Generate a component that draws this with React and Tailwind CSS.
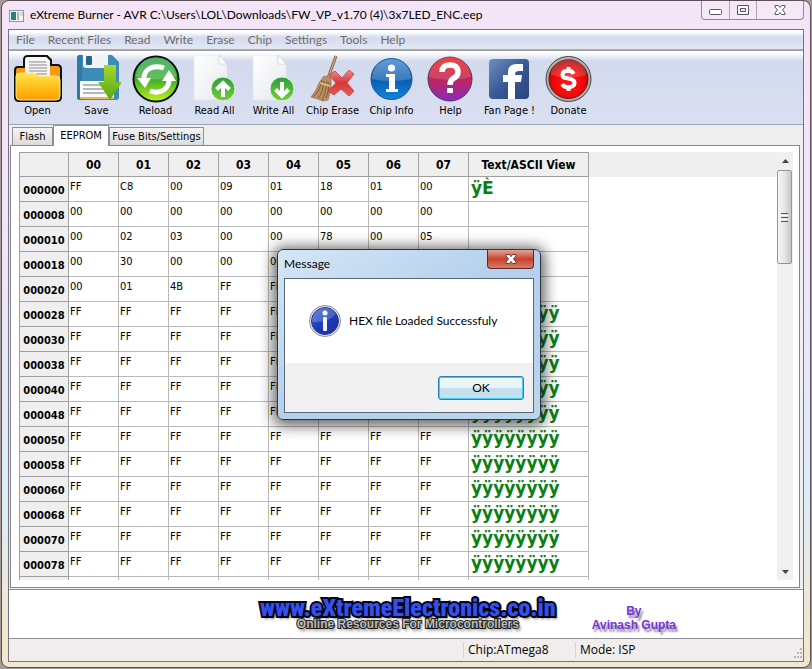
import { useId } from 'react';
import clsx from 'clsx';

const menuItems = ['File', 'Recent Files', 'Read', 'Write', 'Erase', 'Chip', 'Settings', 'Tools', 'Help'];

function OpenIcon() {
  const id = useId();
  return (
    <svg viewBox="0 0 48 48" className="h-12 w-12">
      <defs>
        <linearGradient id={id} x1="0" y1="0" x2="0" y2="1">
          <stop offset="0" stopColor="#ffe552" />
          <stop offset="0.5" stopColor="#ffc21c" />
          <stop offset="1" stopColor="#ff9b00" />
        </linearGradient>
      </defs>
      <path d="M1 42V15q0-3 3-3h6V5q0-4 4-4h19l4 4v5h6q4 0 4 4v28q0 4-4 4H5q-4 0-4-4Z" fill="#f79a10" stroke="#111" strokeWidth="2" />
      <path d="M11 22V5q0-3 3-3h18l4 4v16Z" fill="#f6f6f6" />
      <path d="M15 7h17M15 10h18M15 13h18M15 16h18M22 19h11" stroke="#888" strokeWidth="1" />
      <path d="M2 21q0-3 4-3h13l5 3h18q4 0 4 4v16q0 4-4 4H6q-4 0-4-4Z" fill={`url(#${id})`} stroke="#ffe98a" />
    </svg>
  );
}

function SaveIcon() {
  const id = useId();
  return (
    <svg viewBox="0 0 48 48" className="h-12 w-12">
      <defs>
        <linearGradient id={id} x1="0" y1="0" x2="0" y2="1">
          <stop offset="0" stopColor="#a6d92c" />
          <stop offset="1" stopColor="#55a712" />
        </linearGradient>
      </defs>
      <path d="M4 3q0-3 3-3h32l7 7v35q0 3-3 3H7q-3 0-3-3Z" fill="#3b8db8" />
      <path d="M4 3q0-3 3-3h2v45H7q-3 0-3-3Z" fill="#2c7aa5" />
      <path d="M10 0h25v10q0 3-3 3H13q-3 0-3-3Z" fill="#eef4f8" />
      <rect x="13" y="1" width="6" height="9" rx="1" fill="#24658c" />
      <path d="M7 26h34v17H7Z" fill="#fbfbfb" />
      <path d="M7 42h34v2H7Z" fill="#f0b25c" />
      <path d="M10 30h22M10 34h22M10 38h22" stroke="#9aa3ad" strokeWidth="1.5" />
      <path d="M31 10h12v17h6L37 45 25 27h6Z" fill={`url(#${id})`} />
    </svg>
  );
}

function ReloadIcon() {
  const id = useId();
  return (
    <svg viewBox="0 0 48 48" className="h-12 w-12">
      <defs>
        <linearGradient id={id} x1="0" y1="0" x2="0" y2="1">
          <stop offset="0" stopColor="#1d9a45" />
          <stop offset="0.5" stopColor="#3bae2b" />
          <stop offset="1" stopColor="#c4f01c" />
        </linearGradient>
      </defs>
      <circle cx="24" cy="24" r="22.5" fill={`url(#${id})`} stroke="#0b120b" strokeWidth="2" />
      <path d="M4 22a20 20 0 0 1 40 0q-20 5-40 0Z" fill="#fff" opacity="0.22" />
      <path d="M12 25C11 15 20 9 32 13" fill="none" stroke="#fff" strokeWidth="5" />
      <path d="M37 23C38 33 29 40 18 36" fill="none" stroke="#fff" strokeWidth="5" />
      <path d="M5 23h14l-6 10ZM30 26h14l-7-11Z" fill="#fff" />
    </svg>
  );
}

function PageIcon({ down }) {
  const id = useId();
  return (
    <svg viewBox="0 0 48 48" className="h-12 w-12">
      <defs>
        <linearGradient id={`${id}p`} x1="0" y1="0" x2="1" y2="1">
          <stop offset="0" stopColor="#fff" />
          <stop offset="1" stopColor="#e6e8ee" />
        </linearGradient>
        <linearGradient id={`${id}g`} x1="0" y1="0" x2="0" y2="1">
          <stop offset="0" stopColor="#2a9d3d" />
          <stop offset="1" stopColor="#76cf35" />
        </linearGradient>
      </defs>
      <path d="M3 0h25l8 9v36H3Z" fill={`url(#${id}p)`} stroke="#e3e5ee" strokeWidth="0.7" />
      <path d="M28 0v9h8Z" fill="#fff" stroke="#cfd2da" strokeWidth="0.8" />
      <circle cx="32" cy="34" r="12" fill={`url(#${id}g)`} stroke="#e4f6dc" strokeWidth="1" />
      <path
        d="M32 42V29M25.5 34.5 32 28l6.5 6.5"
        transform={down ? 'rotate(180 32 34.5)' : undefined}
        fill="none"
        stroke="#fff"
        strokeWidth="4"
      />
    </svg>
  );
}

function EraseIcon() {
  const id = useId();
  return (
    <svg viewBox="0 0 48 48" className="h-12 w-12">
      <defs>
        <linearGradient id={id} x1="0" y1="0" x2="0" y2="1">
          <stop offset="0" stopColor="#f08a8a" />
          <stop offset="0.5" stopColor="#d93636" />
          <stop offset="1" stopColor="#e46060" />
        </linearGradient>
      </defs>
      <path d="M27 1 19 23" stroke="#8d6a45" strokeWidth="3" />
      <path d="M27 1 19 23" stroke="#d5b48c" strokeWidth="1" />
      <path d="M15 21l7 2q1 11-3 22l-5 1-5-2-7-2Q8 35 10 28q2-3 5-7Z" fill="#b98f5e" stroke="#9a754b" strokeWidth="0.8" />
      <path d="M13 25Q11 36 4 42M15 26Q14 38 9 43M18 26Q17 38 13 45M20 27Q20 36 17 43" fill="none" stroke="#7d5a37" strokeWidth="1" />
      <path d="M11 28l10 3" stroke="#e0c49c" strokeWidth="1.5" />
      <path d="M20 20l6-4 7 7 7-8 5 4-7 9 7 8-5 5-8-7-7 6-6-4 8-8Z" fill={`url(#${id})`} stroke="#b84040" strokeWidth="0.8" />
    </svg>
  );
}

function InfoIcon() {
  const id = useId();
  return (
    <svg viewBox="0 0 48 48" className="h-12 w-12">
      <defs>
        <linearGradient id={id} x1="0" y1="0" x2="0" y2="1">
          <stop offset="0" stopColor="#3a86cc" />
          <stop offset="0.5" stopColor="#0b5cae" />
          <stop offset="1" stopColor="#1285e0" />
        </linearGradient>
      </defs>
      <circle cx="23.5" cy="24" r="20.5" fill={`url(#${id})`} stroke="#16569c" />
      <path d="M4 24a19.5 20 0 0 1 39 0q-20 4-39 0Z" fill="#fff" opacity="0.2" />
      <circle cx="23.5" cy="13" r="3.6" fill="#fff" />
      <path d="M18 19h9v15h3v3H18v-3h3V22h-3Z" fill="#fff" />
    </svg>
  );
}

function HelpIcon() {
  const id = useId();
  return (
    <svg viewBox="0 0 48 48" className="h-12 w-12">
      <defs>
        <linearGradient id={id} x1="0" y1="0" x2="0" y2="1">
          <stop offset="0" stopColor="#f3201f" />
          <stop offset="0.45" stopColor="#c4264f" />
          <stop offset="1" stopColor="#8a2bc0" />
        </linearGradient>
      </defs>
      <circle cx="23" cy="24" r="22" fill={`url(#${id})`} stroke="#54305c" />
      <path d="M2 22a21 21 0 0 1 42 0q-21 6-42 0Z" fill="#fff" opacity="0.14" />
      <path d="M15 17q0-7 8-7t8 7q0 4-4 6-4 2-4 7" fill="none" stroke="#fff" strokeWidth="5.5" />
      <rect x="20" y="33" width="6" height="5" rx="1" fill="#fff" />
    </svg>
  );
}

function FanPageIcon() {
  const id = useId();
  return (
    <svg viewBox="0 0 48 48" className="h-12 w-12">
      <defs>
        <linearGradient id={id} x1="0" y1="0" x2="1" y2="1">
          <stop offset="0" stopColor="#6f8fc2" />
          <stop offset="0.5" stopColor="#3a5a96" />
          <stop offset="1" stopColor="#2a437d" />
        </linearGradient>
      </defs>
      <rect x="3" y="4" width="40" height="40" rx="4" fill={`url(#${id})`} />
      <path d="M22 44V27h-5v-7h5v-3q0-8 9-8h6v7h-4q-4 0-4 3v1h7l-1 7h-6v17Z" fill="#fff" />
    </svg>
  );
}

function DonateIcon() {
  const id = useId();
  return (
    <svg viewBox="0 0 48 48" className="h-12 w-12">
      <defs>
        <radialGradient id={id} cx="0.5" cy="0.6" r="0.55">
          <stop offset="0" stopColor="#ff1a1a" />
          <stop offset="0.7" stopColor="#f00808" />
          <stop offset="1" stopColor="#a80d0d" />
        </radialGradient>
      </defs>
      <circle cx="23.5" cy="24" r="22.5" fill="#b3aaa5" stroke="#494343" />
      <circle cx="23.5" cy="24" r="19.5" fill={`url(#${id})`} stroke="#5d1a1a" />
      <path d="M6 20a17.5 17.5 0 0 1 35 0q-17 5-35 0Z" fill="#fff" opacity="0.16" />
      <path d="M28.5 19q-1-3-4-3h-3q-4 0-4 4 0 3 4 3l4 1q4 1 4 4t-4 4h-4q-3 0-4-3M23.5 12v4M23.5 32v4" fill="none" stroke="#fff" strokeWidth="4" />
    </svg>
  );
}

const tools = [
  { label: 'Open', icon: <OpenIcon /> },
  { label: 'Save', icon: <SaveIcon /> },
  { label: 'Reload', icon: <ReloadIcon /> },
  { label: 'Read All', icon: <PageIcon /> },
  { label: 'Write All', icon: <PageIcon down /> },
  { label: 'Chip Erase', icon: <EraseIcon /> },
  { label: 'Chip Info', icon: <InfoIcon /> },
  { label: 'Help', icon: <HelpIcon /> },
  { label: 'Fan Page !', icon: <FanPageIcon /> },
  { label: 'Donate', icon: <DonateIcon /> },
];

const tabs = [
  { label: 'Flash', width: 'w-[41px]' },
  { label: 'EEPROM', width: 'w-14' },
  { label: 'Fuse Bits/Settings', width: 'w-[95px]' },
];

const columns = ['00', '01', '02', '03', '04', '05', '06', '07'];

const blank = ['FF', 'FF', 'FF', 'FF', 'FF', 'FF', 'FF', 'FF'];
const filled = 'ÿÿÿÿÿÿÿÿ';

const rows = [
  { address: '000000', bytes: ['FF', 'C8', '00', '09', '01', '18', '01', '00'], text: 'ÿÈ' },
  { address: '000008', bytes: ['00', '00', '00', '00', '00', '00', '00', '00'], text: '' },
  { address: '000010', bytes: ['00', '02', '03', '00', '00', '78', '00', '05'], text: '' },
  { address: '000018', bytes: ['00', '30', '00', '00', '00', '', '', ''], text: '' },
  { address: '000020', bytes: ['00', '01', '4B', 'FF', 'FF', '', '', ''], text: '' },
  { address: '000028', bytes: blank, text: filled },
  { address: '000030', bytes: blank, text: filled },
  { address: '000038', bytes: blank, text: filled },
  { address: '000040', bytes: blank, text: filled },
  { address: '000048', bytes: blank, text: filled },
  { address: '000050', bytes: blank, text: filled },
  { address: '000058', bytes: blank, text: filled },
  { address: '000060', bytes: blank, text: filled },
  { address: '000068', bytes: blank, text: filled },
  { address: '000070', bytes: blank, text: filled },
  { address: '000078', bytes: blank, text: filled },
  { address: '', bytes: ['', '', '', '', '', '', '', ''], text: '' },
];

function CloseGlyph({ stroke }) {
  return (
    <svg viewBox="0 0 12 10" className="h-[10px] w-3">
      <path d="M1 .5h3.500L6 2.500 7.500 .5H11V2L8.500 5 11 8v1.500H7.500L6 7.500 4.500 9.500H1V8L3.500 5 1 2Z" fill="#fff" stroke={stroke} />
    </svg>
  );
}

function TitleBar() {
  return (
    <header className="flex h-7 shrink-0 items-start pl-px">
      <svg viewBox="0 0 16 14" className="mt-2 h-[14px] w-4">
        <rect x="0.500" y="1.500" width="14" height="11" fill="#f4f6f6" stroke="#8c979b" />
        <rect x="2" y="3" width="5" height="8" fill="#2c7f78" />
        <rect x="8" y="3" width="2" height="8" fill="#9dbab8" />
        <rect x="11" y="3" width="3" height="4" fill="#cdd6d8" />
      </svg>
      <h1 className="ml-[5px] mt-[6px] flex-1 truncate font-[Lato,sans-serif] text-[12px] leading-4 text-black">
        eXtreme Burner - AVR C:\Users\LOL\Downloads\FW_VP_v1.70 (4)\3x7LED_ENC.eep
      </h1>
      <div className="flex h-[19px] rounded-b border border-t-0 border-[#94879a] bg-[#f5e9f8]">
        <button aria-label="Minimize" className="flex w-7 items-center justify-center border-r border-[#b3a5b8]">
          <svg viewBox="0 0 13 6" className="mt-1 h-[6px] w-[13px]">
            <rect x="0.500" y="0.500" width="12" height="5" rx="1" fill="#fff" stroke="#595560" />
          </svg>
        </button>
        <button aria-label="Maximize" className="flex w-[27px] items-center justify-center border-r border-[#b3a5b8]">
          <svg viewBox="0 0 12 10" className="h-[10px] w-3">
            <path d="M0.500 0.500h11v9h-11ZM3.500 3.500h5v3h-5Z" fill="#fff" fillRule="evenodd" stroke="#595560" />
          </svg>
        </button>
        <button aria-label="Close" className="flex w-[46px] items-center justify-center">
          <CloseGlyph stroke="#595560" />
        </button>
      </div>
    </header>
  );
}

function HexTable() {
  return (
    <table className="w-full table-fixed border-separate border-spacing-0 text-left">
      <colgroup>
        <col className="w-[50px]" />
        {columns.map((c) => (
          <col key={c} className="w-[50px]" />
        ))}
        <col className="w-[120px]" />
        <col />
      </colgroup>
      <thead>
        <tr className="h-[25px] bg-[#efefef]">
          <th className="border border-[#a0a0a0] p-0" />
          {columns.map((c) => (
            <th key={c} scope="col" className="border-y border-r border-[#a0a0a0] p-0 text-center text-[12px] leading-4 font-bold">
              {c}
            </th>
          ))}
          <th scope="col" className="border-y border-r border-[#a0a0a0] p-0 text-center text-[12px] leading-4 font-bold">
            Text/ASCII View
          </th>
          <th className="p-0" />
        </tr>
      </thead>
      <tbody>
        {rows.map((row, i) => (
          <tr key={i} className="h-[25px]">
            <th
              scope="row"
              className="border-x border-b border-[#a0a0a0] bg-[#efefef] p-0 pt-1 text-center text-[11px] leading-4 font-bold"
            >
              {row.address}
            </th>
            {row.bytes.map((b, j) => (
              <td key={j} className="border-r border-b border-[#b9b9b9] p-0 pt-[2px] pl-px align-top text-[11px] leading-4">
                {b}
              </td>
            ))}
            <td className="border-r border-b border-[#b9b9b9] p-0 pt-px pl-[2px] align-top font-['DejaVu_Sans',sans-serif] text-[17px] leading-5 font-bold text-[#0a7f14]">
              {row.text}
            </td>
            <td className="p-0" />
          </tr>
        ))}
      </tbody>
    </table>
  );
}

function ScrollBar() {
  return (
    <div className="flex w-4 shrink-0 flex-col bg-[#f0f0f0]">
      <button aria-label="Scroll up" className="flex h-[18px] items-center justify-center">
        <svg viewBox="0 0 7 4" className="h-1 w-[7px]">
          <path d="M0 4 3.500 0 7 4Z" fill="#444" />
        </svg>
      </button>
      <div className="flex h-[94px] w-[15px] flex-col items-center justify-center gap-px rounded-xs border border-[#979797] bg-linear-to-r from-[#f6f6f6] via-[#e6e6e8] to-[#c6c6ca]">
        <span className="h-px w-[7px] bg-[#555]" />
        <span className="h-px w-[7px] bg-white" />
        <span className="h-px w-[7px] bg-[#555]" />
        <span className="h-px w-[7px] bg-white" />
        <span className="h-px w-[7px] bg-[#555]" />
      </div>
      <button aria-label="Scroll down" className="mt-auto flex h-[17px] items-center justify-center">
        <svg viewBox="0 0 7 4" className="h-1 w-[7px]">
          <path d="M0 0 3.500 4 7 0Z" fill="#444" />
        </svg>
      </button>
    </div>
  );
}

function MessageDialog() {
  return (
    <div
      role="dialog"
      aria-labelledby="message-title"
      className="w-[264px] rounded-md border border-[#2b3540] bg-linear-to-br from-[#d5e6f6] via-[#b4d0ec] to-[#b9d6ea] px-[6px] pb-[6px] font-[Lato,sans-serif] text-[12px] text-black shadow-[0_2px_14px_4px_rgba(0,0,0,0.6)]"
    >
      <div className="flex h-7 items-start justify-between">
        <h2 id="message-title" className="mt-[6px] leading-4">
          Message
        </h2>
        <button
          aria-label="Close"
          className="flex h-[19px] w-[47px] items-center justify-center rounded-b border border-t-0 border-[#5b2a2c] bg-linear-to-b from-[#e2a497] via-[#c8402c] to-[#d97a60]"
        >
          <CloseGlyph stroke="#6b3a3a" />
        </button>
      </div>
      <div className="border border-[#58677a] bg-white">
        <div className="flex h-[84px] items-center pl-6">
          <svg viewBox="0 0 32 32" className="h-8 w-8">
            <defs>
              <linearGradient id="dialog-info" x1="0" y1="0" x2="1" y2="1">
                <stop offset="0" stopColor="#3b66d8" />
                <stop offset="0.5" stopColor="#1b3cb8" />
                <stop offset="1" stopColor="#1a2f9c" />
              </linearGradient>
            </defs>
            <circle cx="16" cy="16" r="15.500" fill="#e8e8ec" stroke="#8c8c94" />
            <circle cx="16" cy="16" r="13.500" fill="url(#dialog-info)" stroke="#24398f" />
            <path d="M3 17a13 13 0 0 1 24-8q-8 9-24 8Z" fill="#fff" opacity="0.2" />
            <circle cx="16" cy="8" r="2.500" fill="#fff" />
            <rect x="14" y="12" width="4" height="14" rx="1" fill="#f4f4f8" />
          </svg>
          <p className="ml-2 leading-4">HEX file Loaded Successfuly</p>
        </div>
        <div className="flex h-[49px] items-center justify-end bg-[#f0f0f0] pr-[9px]">
          <button className="h-6 w-[86px] rounded-[3px] border border-[#2c7fae] bg-linear-to-b from-[#eaf5fa] from-50% to-[#c4e0ee] to-50% leading-4 inset-ring inset-ring-[#48c8f0]">
            OK
          </button>
        </div>
      </div>
    </div>
  );
}

export default function App() {
  return (
    <div className="relative h-screen w-full overflow-hidden bg-[#a69a98] pr-px pb-px pl-px font-['DejaVu_Sans_Condensed','DejaVu_Sans',sans-serif] text-black">
      <div className="flex h-full flex-col rounded-lg border border-[#5d4e58] bg-linear-to-b from-[#f4e4f8] from-20% via-[#dcecf5] via-75% to-[#f0e7cf] to-95% px-[6px] pb-[5px]">
        <TitleBar />

        <div className="flex min-h-0 flex-1 flex-col border border-[#77727c] bg-[#efefef]">
          <nav className="flex h-5 shrink-0 items-center gap-[13px] border-b border-[#a5a8b4] bg-linear-to-b from-white from-10% via-[#d5dbee] via-40% to-[#e3e8f5] pl-[7px] font-[Lato,sans-serif] text-[12px] leading-4 text-[#6d6d6d]">
            {menuItems.map((item) => (
              <button key={item}>{item}</button>
            ))}
          </nav>

          <div className="flex h-[75px] shrink-0 border-t border-b border-t-[#a0a0a0] border-b-[#9ea5b5] bg-linear-to-b from-white from-2% via-[#d3daed] via-14% to-[#dae0f2] pt-1">
            {tools.map(({ label, icon }) => (
              <button key={label} className="flex w-[59px] flex-col items-center pr-[2px] text-[11px] leading-4 whitespace-nowrap">
                {icon}
                {label}
              </button>
            ))}
          </div>

          <div role="tablist" className="flex h-5 shrink-0 items-end pl-[3px] text-[11px] leading-4">
            {tabs.map(({ label, width }) => (
              <button
                key={label}
                role="tab"
                aria-selected={label === 'EEPROM'}
                className={clsx(
                  'border border-b-0 border-[#8e8f94] whitespace-nowrap',
                  width,
                  label === 'EEPROM' ? 'relative z-10 -mb-px h-[21px] bg-white' : 'h-[18px] bg-linear-to-b from-[#f4f4f4] to-[#dcdcdc]'
                )}
              >
                {label}
              </button>
            ))}
          </div>

          <main className="mr-[3px] ml-px flex min-h-0 flex-1 border border-[#85868c] bg-white pt-[6px] pr-[6px] pb-[7px] pl-2">
            <div className="min-w-0 flex-1 overflow-hidden">
              <HexTable />
            </div>
            <ScrollBar />
          </main>

          <section className="mt-px flex h-[50px] shrink-0 items-center justify-center border-y border-[#8e8e92] bg-white">
            <div className="ml-[124px] flex flex-col items-center">
              <a
                href="#site"
                className="font-['Roboto_Condensed','Liberation_Sans',sans-serif] text-[24px] leading-6 font-black text-[#3350ee] [-webkit-text-stroke:4px_#05051a] [paint-order:stroke_fill] [text-shadow:2px_3px_3px_#0008]"
              >
                www.eXtremeElectronics.co.in
              </a>
              <p className="-mt-1 font-['Liberation_Sans',sans-serif] text-[12px] leading-4 font-bold text-[#bdbdbd] [-webkit-text-stroke:2px_#222] [paint-order:stroke_fill] [text-shadow:2px_3px_3px_#0008]">
                Online Resources For Microcontrollers
              </p>
            </div>
            <p className="mt-2 ml-9 text-center font-['Liberation_Sans',sans-serif] text-[12px] leading-[14px] font-bold text-[#7733dd] [text-shadow:2px_3px_2px_#0007]">
              By
              <br />
              Avinash Gupta
            </p>
          </section>

          <footer className="flex h-[22px] shrink-0 items-center justify-end bg-[#f0edec] font-['Open_Sans',sans-serif] text-[12px] leading-4">
            <span className="w-28 border-l border-[#d7d4d4] pl-1">Chip:ATmega8</span>
            <span className="flex w-[228px] items-end justify-between border-l border-[#d7d4d4] pl-1">
              Mode: ISP
              <svg viewBox="0 0 10 10" className="h-[10px] w-[10px]">
                <path d="M7 0h2v2H7ZM4 4h2v2H4ZM7 4h2v2H7ZM1 8h2v2H1ZM4 8h2v2H4ZM7 8h2v2H7Z" fill="#bbb8b8" />
              </svg>
            </span>
          </footer>
        </div>
      </div>

      <div className="absolute inset-0 z-20 flex items-center justify-center pl-[6px]">
        <MessageDialog />
      </div>
    </div>
  );
}
